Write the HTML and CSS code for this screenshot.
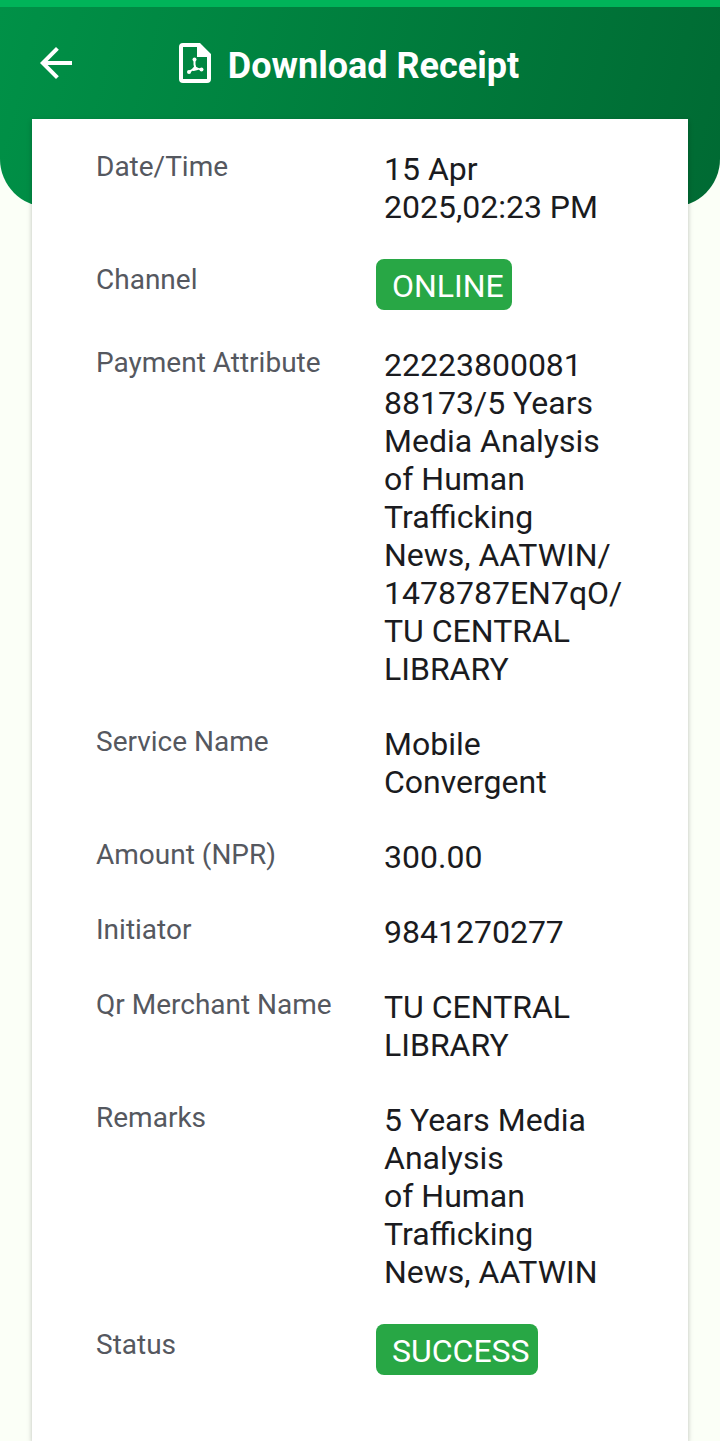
FILE: index.html
```
<!DOCTYPE html>
<html lang="en">

<head>
    <meta charset="utf-8">
    <meta name="viewport" content="width=device-width, initial-scale=1.0">
    <title>Download Receipt</title>

    <link rel="stylesheet" href="styles.css">
</head>

<body>
    <header class="top-bar">
        <button type="button" class="back-btn" aria-label="Back">
            <svg viewBox="0 0 24 24" aria-hidden="true">
                <path d="M20 11H7.83l5.59-5.59L12 4l-8 8 8 8 1.41-1.41L7.83 13H20v-2z" />
            </svg>
        </button>
        <button type="button" class="download-btn">
            <svg viewBox="0 0 48 48" aria-hidden="true">
                <path fill-rule="evenodd" d="M12 4h17l11 11v25a4 4 0 0 1-4 4H12a4 4 0 0 1-4-4V8a4 4 0 0 1 4-4zm0 4v32h24V18H26V8z" />
                <path class="pdf-mark" d="M23.500 20.500v5q.5 2 1 3.500M24 28q-2 3-6 5M24.500 28.500q2.500 1.500 5.500 2M22.500 31l4-1" />
                <circle cx="23.500" cy="20.500" r="2" />
                <circle cx="18" cy="33" r="2" />
                <circle cx="30.500" cy="30.500" r="2" />
            </svg>
            <span>Download Receipt</span>
        </button>
    </header>

    <main class="receipt">
        <dl class="details">
            <dt>Date/Time</dt>
            <dd>15 Apr 2025,02:23 PM</dd>

            <dt>Channel</dt>
            <dd class="badge">ONLINE</dd>

            <dt>Payment Attribute</dt>
            <dd>22223800081<br>88173/5 Years Media Analysis<br>of Human Trafficking<br>News, AATWIN/<br>1478787EN7qO/<br>TU CENTRAL LIBRARY</dd>

            <dt>Service Name</dt>
            <dd>Mobile Convergent</dd>

            <dt>Amount (NPR)</dt>
            <dd>300.00</dd>

            <dt>Initiator</dt>
            <dd>9841270277</dd>

            <dt>Qr Merchant Name</dt>
            <dd>TU CENTRAL LIBRARY</dd>

            <dt>Remarks</dt>
            <dd>5 Years Media Analysis<br>of Human Trafficking<br>News, AATWIN</dd>

            <dt>Status</dt>
            <dd class="badge">SUCCESS</dd>
        </dl>
    </main>
</body>

</html>
```
FILE: styles.css
```
html {
    font-family: Roboto, sans-serif;
    box-sizing: border-box;
}

*,
*::before,
*::after {
    box-sizing: inherit;
}

body {
    display: flex;
    flex-direction: column;
    min-height: 100vh;
    margin: 0;
    background-color: #fbfff7;
}

button {
    padding: 0;
    border: none;
    background: none;
    color: inherit;
    font: inherit;
    cursor: pointer;
}

svg {
    display: block;
    width: 48px;
    height: 48px;
    fill: currentColor;
}

/* the top border is the strip under the status bar */
.top-bar {
    display: flex;
    align-items: center;
    padding: 32px 110px 120px 32px;
    border-top: 7px solid #00b459;
    border-radius: 0 0 48px 48px;
    background: linear-gradient(105deg, #009147, #006a33) padding-box;
    color: white;
}

.download-btn {
    display: flex;
    align-items: center;
    gap: 9px;
    margin: 0 auto;
    font-size: 36px;
    font-weight: 700;
    line-height: 42px;
}

.download-btn span {
    padding-top: 6px;
}

.pdf-mark {
    fill: none;
    stroke: currentColor;
    stroke-width: 2;
    stroke-linecap: round;
}

/* card slides up over the green header */
.receipt {
    flex: 1;
    margin: -88px 32px 0;
    padding: 27px 64px 66px;
    background-color: white;
    box-shadow: 0 2px 5px rgba(0, 0, 0, 0.25);
}

.details {
    display: grid;
    grid-template-columns: 280px 1fr;
    row-gap: 32px;
    margin: 0;
}

.details dt {
    padding-top: 4px;
    color: #55585f;
    font-size: 28px;
    line-height: 34px;
}

.details dd {
    margin: 0;
    padding: 4px 0 1px 8px;
    color: #1a1b20;
    font-size: 32px;
    line-height: 38px;
}

.details .badge {
    justify-self: start;
    padding: 8px 8px 5px 16px;
    border-radius: 8px;
    background-color: #28a745;
    color: white;
}
```
